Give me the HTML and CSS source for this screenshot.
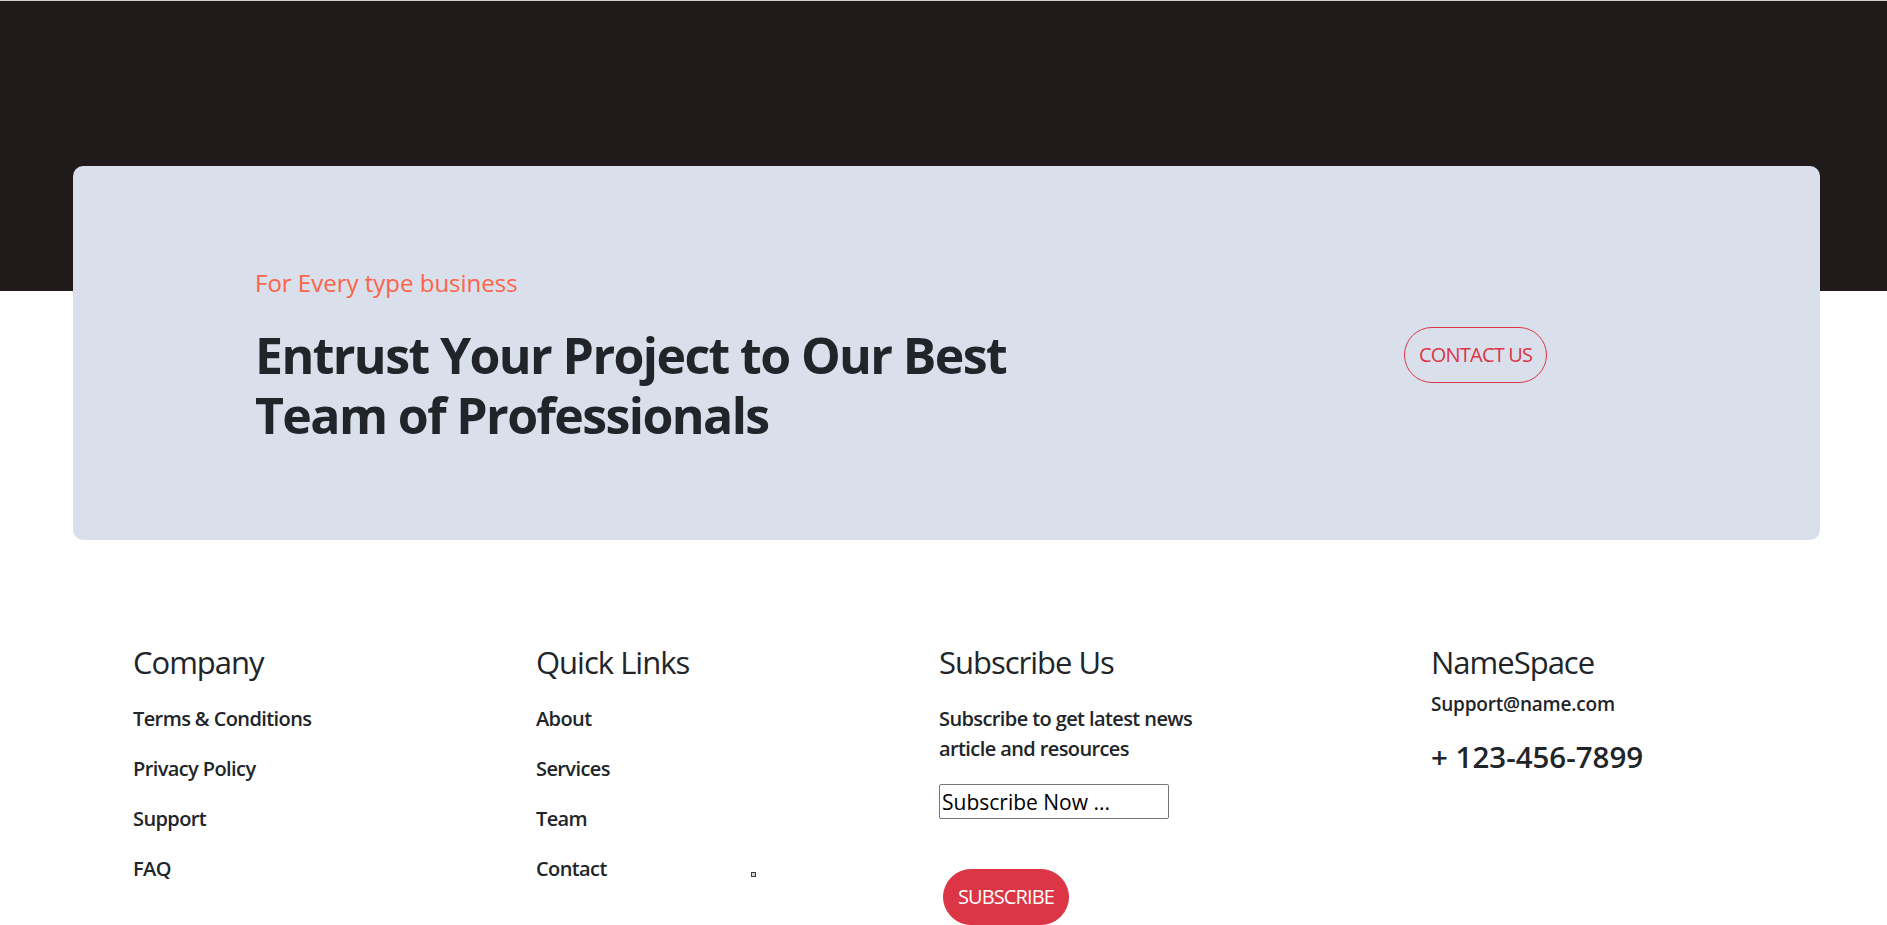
FILE: index.html
```html
<!DOCTYPE html>
<html lang="en">
<head>
<meta charset="utf-8">
<title>Footer</title>
<link rel="stylesheet" href="styles.css">
</head>
<body>
<section class="hero">
  <div class="cta-card">
    <div class="cta-text">
      <p class="cta-sub">For Every type business</p>
      <h1 class="cta-title">Entrust Your Project to Our Best Team of Professionals</h1>
    </div>
    <div class="cta-action">
      <a class="btn-outline" href="#">CONTACT US</a>
    </div>
  </div>
</section>

<footer class="footer">
  <div class="col">
    <h2 class="col-title">Company</h2>
    <ul class="links">
      <li><a href="#">Terms &amp; Conditions</a></li>
      <li><a href="#">Privacy Policy</a></li>
      <li><a href="#">Support</a></li>
      <li><a href="#">FAQ</a></li>
    </ul>
  </div>
  <div class="col col-quick">
    <h2 class="col-title">Quick Links</h2>
    <ul class="links">
      <li><a href="#">About</a></li>
      <li><a href="#">Services</a></li>
      <li><a href="#">Team</a></li>
      <li class="has-dot"><a href="#">Contact</a><span class="dot"></span></li>
    </ul>
  </div>
  <div class="col">
    <h2 class="col-title">Subscribe Us</h2>
    <p class="sub-text">Subscribe to get latest news article and resources</p>
    <input class="sub-input" type="text" value="Subscribe Now ...">
    <div class="sub-btn-row"><button class="btn-fill" type="button">SUBSCRIBE</button></div>
  </div>
  <div class="col col-contact">
    <h2 class="col-title">NameSpace</h2>
    <p class="contact-mail">Support@name.com</p>
    <h3 class="contact-phone">+ 123-456-7899</h3>
  </div>
</footer>
</body>
</html>
```

FILE: styles.css
```css
* { box-sizing: border-box; }

html, body {
  margin: 0;
  padding: 0;
}

body {
  font-family: "Open Sans", "Noto Sans", "Liberation Sans", sans-serif;
  color: #212529;
  background: #ffffff;
  border-top: 1px solid #cfcfcf;
}

a { color: inherit; text-decoration: none; }

.hero {
  background: linear-gradient(#201a1a 0, #201a1a 290px, #ffffff 290px);
  padding: 165px 67px 0 73px;
}

.cta-card {
  background: #d9e0eb;
  border-radius: 10px;
  height: 374px;
  padding-left: 182px;
  display: grid;
  grid-template-columns: 1149px auto;
  align-items: center;
}

.cta-text {
  padding-top: 4px;
}

.cta-sub {
  margin: 0 0 23.5px;
  font-size: 24px;
  line-height: 36px;
  color: #ff6347;
}

.cta-title {
  margin: 0;
  font-size: 50px;
  line-height: 60px;
  font-weight: 700;
  letter-spacing: -1.6px;
  max-width: 800px;
}

.cta-action {
  padding-top: 3px;
}

.btn-outline {
  display: inline-block;
  font-size: 20px;
  line-height: 30px;
  padding: 12px 14px;
  border: 1px solid #dc3545;
  border-radius: 30px;
  color: #dc3545;
  letter-spacing: -0.8px;
}

.footer {
  display: grid;
  grid-template-columns: 403px 403px 492px auto;
  padding: 103px 0 0 133px;
}

.col-title {
  margin: 0 0 23px;
  font-size: 31px;
  line-height: 38.4px;
  font-weight: 500;
  letter-spacing: -1px;
}

.links {
  list-style: none;
  margin: 0;
  padding: 0;
}

.links li {
  font-size: 20px;
  line-height: 30px;
  font-weight: 600;
  letter-spacing: -0.6px;
  margin-bottom: 20px;
}

.has-dot {
  position: relative;
}

.dot {
  position: absolute;
  left: 215px;
  top: 18px;
  width: 5px;
  height: 5px;
  background: #d8d8d8;
  border: 1px solid #3a3a3a;
}

.sub-text {
  margin: 0 0 20px;
  font-size: 20px;
  line-height: 30px;
  font-weight: 600;
  letter-spacing: -0.6px;
  max-width: 290px;
}

.sub-input {
  display: block;
  width: 230px;
  height: 35px;
  font-family: inherit;
  font-size: 21px;
  color: #000;
  padding: 1px 2px;
  border: 1px solid #767676;
  border-radius: 2px;
  margin: 0 0 50px;
  background: #fff;
}

.sub-btn-row {
  padding-left: 4px;
}

.btn-fill {
  font-family: inherit;
  font-size: 20px;
  line-height: 30px;
  padding: 12px 14px;
  border: 1px solid #dc3545;
  border-radius: 30px;
  background: #dc3545;
  color: #fff;
  letter-spacing: -0.9px;
}

.col-contact .col-title {
  margin-bottom: 9px;
}

.contact-mail {
  margin: 0 0 21px;
  font-size: 19px;
  line-height: 28.5px;
  font-weight: 600;
  letter-spacing: -0.2px;
}

.contact-phone {
  margin: 0;
  font-size: 29.5px;
  line-height: 33.6px;
  font-weight: 600;
}
```
